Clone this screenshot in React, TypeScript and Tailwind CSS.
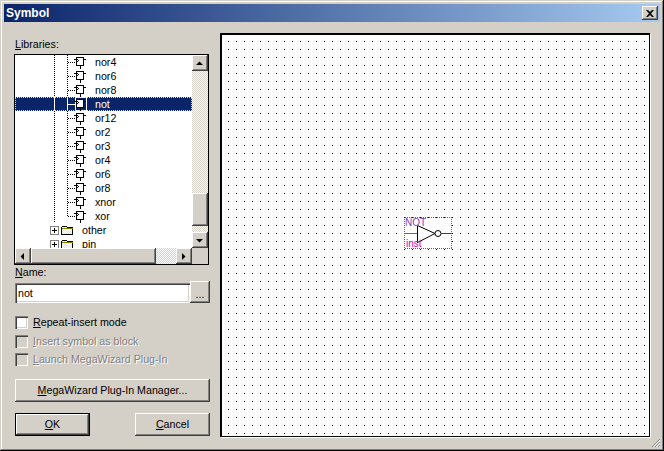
import React from 'react';

const ui = { fontFamily: '"Liberation Sans", Arial, sans-serif' };
const raised =
  'bg-[#d4d0c8] shadow-[inset_-1px_-1px_0_#404040,inset_1px_1px_0_#fff,inset_-2px_-2px_0_#808080]';
const dither = 'bg-[repeating-conic-gradient(#d4d0c8_0_25%,#fff_0_50%)] bg-[length:2px_2px]';
const sunken = 'shadow-[inset_1px_1px_0_#808080,inset_2px_2px_0_#404040,inset_-1px_-1px_0_#fff,inset_-2px_-2px_0_#d4d0c8]';

const SYMBOLS = ['nor4', 'nor6', 'nor8', 'not', 'or12', 'or2', 'or3', 'or4', 'or6', 'or8', 'xnor', 'xor'];

function TreeLines({ last, selected }: { last: boolean; selected: boolean }) {
  const ink = selected ? '#fff' : '#000';
  const dash = selected ? undefined : '1 1';
  return (
    <svg width="76" height="14" className="shrink-0" shapeRendering="crispEdges">
      <line x1="39.5" y1="0" x2="39.5" y2="14" stroke={ink} strokeDasharray={dash} />
      <line x1="52.5" y1="0" x2="52.5" y2={last ? 7 : 14} stroke={ink} strokeDasharray={dash} />
      <line x1="53" y1="7.5" x2="60" y2="7.5" stroke={ink} strokeDasharray={dash} />
      {selected && <rect x="60.5" y="0.5" width="11" height="13" fill="none" stroke="#fff" />}
      {/* symbol glyph */}
      <path d="M59 4.5h2M61.5 2.5h7v8h-7zM69 4.5h2M65.5 11v3" fill={selected ? '#fff' : 'none'} stroke="#000" />
      <path d="M61.5 4l2 1.5-2 1.5" fill="none" stroke="#000" />
    </svg>
  );
}

function Folder({ id }: { id: string }) {
  return (
    <svg width="13" height="11" className="shrink-0" shapeRendering="crispEdges">
      <defs>
        <pattern id={id} width="2" height="2" patternUnits="userSpaceOnUse">
          <rect width="2" height="2" fill="#ffff00" />
          <rect width="1" height="1" fill="#fff" />
          <rect x="1" y="1" width="1" height="1" fill="#fff" />
        </pattern>
      </defs>
      <path d="M0.500 9.500v-7l1-1h4l1 1h5v7z" fill={`url(#${id})`} stroke="#000" />
      <path d="M1 3.500h11" stroke="#808000" />
    </svg>
  );
}

function FolderRow({ label }: { label: string }) {
  return (
    <div className="flex h-[14px] items-start">
      <div className="ml-[35px] mt-[3px] flex h-[9px] w-[9px] items-center justify-center border border-[#808080] bg-white">
        <span className="block h-[5px] w-[5px] bg-[linear-gradient(#000,#000),linear-gradient(#000,#000)] bg-[length:5px_1px,1px_5px] bg-center bg-no-repeat" />
      </div>
      <div className="ml-[2px] mt-[2px]"><Folder id={`dots-${label}`} /></div>
      <span className="ml-[8px] mt-[1px]">{label}</span>
    </div>
  );
}

function Arrow({ dir }: { dir: 'up' | 'down' | 'left' | 'right' }) {
  const d = {
    up: 'M4 8h7L7.5 4.5z',
    down: 'M4 5h7L7.5 8.5z',
    left: 'M9 3v7L5.5 6.5z',
    right: 'M6 3v7l3.5-3.5z',
  }[dir];
  return (
    <svg width="16" height="13" viewBox="0 0 16 13"><path d={d} fill="#000" /></svg>
  );
}

function ScrollBtn({ dir }: { dir: 'up' | 'down' | 'left' | 'right' }) {
  return (
    <div className={`${raised} flex h-4 w-4 shrink-0 items-center justify-center`}>
      <Arrow dir={dir} />
    </div>
  );
}

function Check({ label, hot, disabled }: { label: string; hot: string; disabled?: boolean }) {
  return (
    <div className={`flex h-[13px] items-center gap-[5px] ${disabled ? 'text-[#808080] [text-shadow:1px_1px_0_#fff]' : 'text-black'}`}>
      <span className={`h-[13px] w-[13px] shrink-0 ${disabled ? 'bg-[#d4d0c8]' : 'bg-white'} ${sunken}`} />
      <span className="whitespace-nowrap"><u>{hot}</u>{label}</span>
    </div>
  );
}

function PushButton({ children, className }: { children: React.ReactNode; className?: string }) {
  return (
    <button className={`${raised} flex items-center justify-center text-black ${className ?? ''}`}>{children}</button>
  );
}

export default function App() {
  return (
    <div style={ui} className="relative flex h-[451px] w-[664px] flex-col overflow-hidden bg-[#d4d0c8] p-1 text-[10.67px] leading-[13px] text-black shadow-[inset_-1px_-1px_0_#000,inset_1px_1px_0_#d4d0c8,inset_-2px_-2px_0_#808080,inset_2px_2px_0_#fff]">
      <header className="flex h-[18px] shrink-0 items-center justify-between bg-[linear-gradient(90deg,#0a246a,#a6caf0)] pl-[2px] pr-[2px]">
        <span className="text-[12px] font-bold text-white">Symbol</span>
        <div className={`${raised} flex h-[14px] w-4 items-center justify-center`}>
          <svg width="8" height="7" viewBox="0 0 8 7"><path d="M0 0h2l2 2 2-2h2L5 3.500 8 7H6L4 5 2 7H0l3-3.500z" fill="#000" /></svg>
        </div>
      </header>

      <div className="flex flex-1 pl-[10px] pt-[11px]">
        <div className="flex w-[196px] shrink-0 flex-col">
          <label className="mt-[5px] h-[16px] pl-[1px]"><u>L</u>ibraries:</label>
          <div className="flex h-[211px] w-[195px] flex-col border border-black">
            <div className="flex min-h-0 flex-1">
              <div className="min-w-0 flex-1 overflow-hidden bg-white">
                {SYMBOLS.map((name, i) => {
                  const selected = name === 'not';
                  return (
                    <div
                      key={name}
                      className={`flex h-[14px] items-start ${selected ? 'bg-[#0a246a] text-white outline-1 -outline-offset-1 outline-dotted outline-[#f5db95]' : ''}`}
                    >
                      <TreeLines last={i === SYMBOLS.length - 1} selected={selected} />
                      <span className="ml-[4px] mt-[1px]">{name}</span>
                    </div>
                  );
                })}
                <FolderRow label="other" />
                <FolderRow label="pin" />
              </div>
              <div className={`${dither} flex w-4 shrink-0 flex-col`}>
                <ScrollBtn dir="up" />
                <div className="flex-1" />
                <div className={`${raised} h-[33px] w-4`} />
                <div className="h-[6px]" />
                <ScrollBtn dir="down" />
              </div>
            </div>
            <div className="flex h-4 shrink-0 bg-[#d4d0c8]">
              <ScrollBtn dir="left" />
              <div className={`${raised} h-4 w-[125px]`} />
              <div className={`${dither} h-4 flex-1`} />
              <ScrollBtn dir="right" />
              <div className="w-4 shrink-0" />
            </div>
          </div>

          <label className="h-[16px] pt-[1px] pl-[1px]"><u>N</u>ame:</label>
          <div className="flex h-[22px] items-end pl-[1px]">
            <div className={`flex h-[20px] w-[175px] items-center bg-white pl-[3px] ${sunken}`}>not</div>
            <PushButton className="h-[22px] w-[20px] items-end pb-[2px]">...</PushButton>
          </div>

          <div className="mt-[13px] flex flex-col pl-[1px]">
            <Check hot="R" label="epeat-insert mode" />
            <div className="mt-[6px]"><Check hot="I" label="nsert symbol as block" disabled /></div>
            <div className="mt-[5px]"><Check hot="L" label="aunch MegaWizard Plug-In" disabled /></div>
          </div>

          <PushButton className="ml-[1px] mt-[13px] h-[23px] w-[195px]"><span><u>M</u>egaWizard Plug-In Manager...</span></PushButton>

          <div className="ml-[1px] mt-[11px] flex justify-between">
            <PushButton className="h-[23px] w-[75px] border border-black"><span><u>O</u>K</span></PushButton>
            <PushButton className="h-[23px] w-[75px]"><span><u>C</u>ancel</span></PushButton>
          </div>
        </div>

        <div className="relative ml-[10px] h-[404px] w-[430px] bg-white shadow-[inset_2px_2px_0_#000,inset_-1px_-1px_0_#000,1px_1px_0_#fff]">
          <svg className="absolute inset-0" width="430" height="404" shapeRendering="crispEdges">
            <defs>
              <pattern id="dots" x="0" y="0" width="8" height="8" patternUnits="userSpaceOnUse">
                <rect x="0" y="0" width="1" height="1" fill="#000" />
              </pattern>
            </defs>
            <rect x="2" y="2" width="426" height="400" fill="url(#dots)" />
            {/* NOT primitive */}
            <rect x="184.500" y="184.500" width="47" height="31" fill="#fff" stroke="#008c8c" strokeDasharray="1 1" />
          </svg>
          <svg className="absolute left-[184px] top-[184px] overflow-visible" width="48" height="32">
            <path d="M0.500 16.500h13" stroke="#0a84d8" fill="none" />
            <path d="M13.500 9v17" stroke="#000" fill="none" />
            <path d="M13.500 8.500L31 16.500L13.500 25.500" fill="none" stroke="#000" />
            <circle cx="34" cy="16.500" r="3" fill="#fff" stroke="#000" />
            <path d="M37 16.500h10" stroke="#7010b0" fill="none" />
          </svg>
          <span className="absolute left-[185px] top-[185px] text-[10px] leading-[10px] text-[#8040c0]">NOT</span>
          <span className="absolute left-[186px] top-[206px] text-[10px] leading-[10px] text-[#d000c0]">inst</span>
        </div>
      </div>

      <svg className="absolute bottom-[4px] right-[4px]" width="8" height="8" shapeRendering="crispEdges">
        <path d="M8 0L0 8M8 3L3 8M8 6L6 8" stroke="#808080" strokeWidth="1" />
        <path d="M8 1L1 8M8 4L4 8M8 7L7 8" stroke="#fff" strokeWidth="1" />
      </svg>
    </div>
  );
}
